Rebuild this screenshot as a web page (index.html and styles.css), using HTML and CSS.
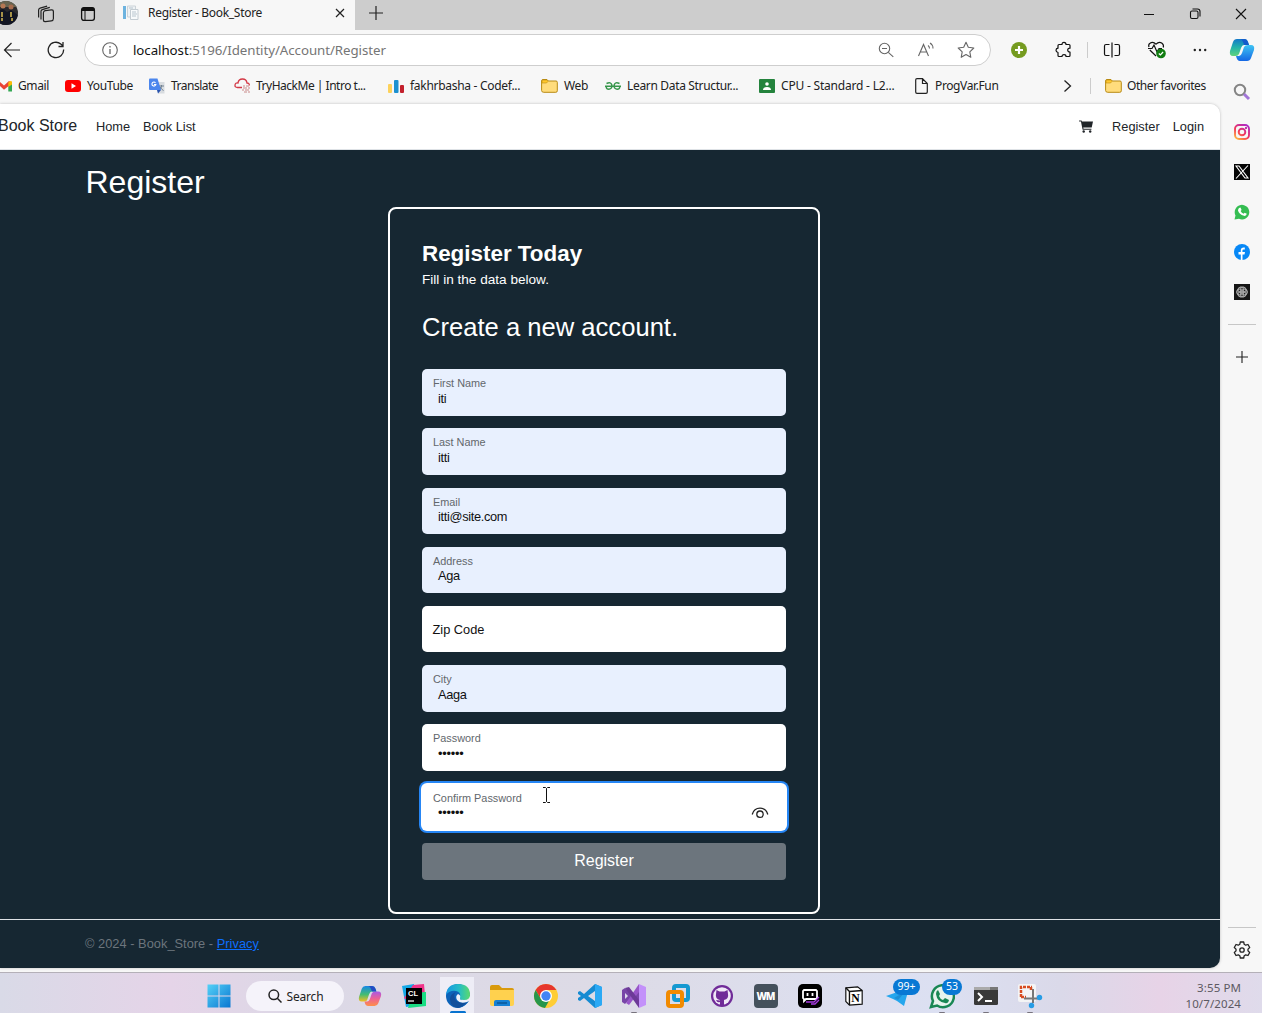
FILE: index.html
```html
<!DOCTYPE html>
<html lang="en">
<head>
<meta charset="utf-8">
<title>Register - Book_Store</title>
<link rel="stylesheet" href="styles.css">
</head>
<body>
<div class="screen">
  <div class="tabstrip">
    <svg class="avatar" width="24" height="28" viewBox="0 0 24 28"><defs><clipPath id="av"><circle cx="6" cy="13" r="12"/></clipPath></defs><g clip-path="url(#av)"><rect x="-6" width="24" height="28" fill="#29292c"/><path d="M0 0h18v7H0z" fill="#686450"/><circle cx="3" cy="6" r="2.5" fill="#b57854"/><circle cx="11" cy="7" r="2.5" fill="#a66b4d"/><path d="M-3 11l6-2 4 3 4-2 7 5v12H-3z" fill="#111522"/><path d="M2 12v5M11 12v5M2 18v3M12 18v3" stroke="#d9bd56" stroke-width="1.5"/></g></svg>
    <div class="strip-icon spaces"><svg width="18" height="18" viewBox="0 0 18 18" fill="none" stroke="#222" stroke-width="1.2"><rect x="6.4" y="5.2" width="10" height="11" rx="2" transform="skewY(-7) translate(0 1.4)"/><path d="M4 14.5V6.3q0-1.3 1.3-1.7l7.5-2.2M1.6 12.4V5q0-1.5 1.5-1.9l7-2"/></svg></div>
    <div class="strip-icon"><svg width="16" height="16" viewBox="0 0 16 16"><rect x="1.6" y="1.6" width="12.8" height="12.8" rx="2.3" fill="none" stroke="#111" stroke-width="1.3"/><path d="M1.6 3.5q0-2 2-2h8.800q2 0 2 2V5H1.600zM4.500 5h1v9h-1z" fill="#111"/></svg></div>
    <div class="tab">
      <svg width="16" height="16" viewBox="0 0 16 16"><path d="M0 1h3v13H0z" fill="#6db3df"/><path d="M4.500 1h8v11h-8z" fill="#eef2f4" stroke="#cbd2d7"/><path d="M7.500 4.500H15v10H7.500z" fill="#f8fafb" stroke="#c4ccd2"/><path d="M9 7h4M9 9h5M9 11h4M6 3h4" stroke="#b8c5ce"/></svg>
      <span class="tab-title">Register - Book_Store</span>
      <svg width="10" height="10" viewBox="0 0 10 10"><path d="M1 1l8 8M9 1L1 9" stroke="#222" stroke-width="1.200"/></svg>
    </div>
    <svg class="newtab" width="14" height="14" viewBox="0 0 14 14"><path d="M7 0v14M0 7h14" stroke="#222" stroke-width="1.200"/></svg>
    <div class="window-controls">
      <svg width="12" height="12" viewBox="0 0 12 12"><path d="M1 6.500h10" stroke="#111"/></svg>
      <svg width="12" height="12" viewBox="0 0 12 12" fill="none" stroke="#111" stroke-width="1.100"><rect x="1.500" y="3" width="7.500" height="7.500" rx="1.500"/><path d="M3.500 1h5q2.500 0 2.500 2.500V8.500"/></svg>
      <svg width="12" height="12" viewBox="0 0 12 12"><path d="M1 1l10 10M11 1L1 11" stroke="#111" stroke-width="1.100"/></svg>
    </div>
  </div>

  <div class="browser">
    <div class="main">
      <div class="toolbar">
        <svg class="back" width="18" height="16" viewBox="0 0 18 16" fill="none" stroke="#222" stroke-width="1.200"><path d="M17 8H2M8.500 1L1.500 8l7 7"/></svg>
        <svg class="reload" width="18" height="18" viewBox="0 0 18 18" fill="none" stroke="#222" stroke-width="1.300"><path d="M16.600 8.500A7.700 7.700 0 1 1 13.800 3L16 5M16 1v4.500h-4.500"/></svg>
        <div class="address">
          <svg width="16" height="16" viewBox="0 0 16 16"><circle cx="8" cy="8" r="7.300" fill="none" stroke="#666" stroke-width="1.100"/><path d="M8 7v5M8 4v1.500" stroke="#666" stroke-width="1.300"/></svg>
          <span class="url"><b>localhost</b>:5196/Identity/Account/Register</span>
          <svg class="zoom" width="16" height="16" viewBox="0 0 16 16" fill="none" stroke="#666" stroke-width="1.100"><circle cx="6.500" cy="6.500" r="5.200"/><path d="M10.300 10.300l5 4.500M4 6.500h5"/></svg>
          <svg class="read" width="18" height="16" viewBox="0 0 18 16" fill="none" stroke="#666" stroke-width="1.100"><path d="M1.500 14L6.500 2.500l5 11.500M3.300 10h6.500M11 3.500q1.500 1 1.500 3M13 1q3 1.700 3 5.500"/></svg>
          <svg width="18" height="18" viewBox="0 0 18 18" fill="none" stroke="#666" stroke-width="1.100" stroke-linejoin="round"><path d="M9 1.300l2.300 5 5.500.700-4 3.800 1 5.500L9 13.600l-4.800 2.700 1-5.500-4-3.800 5.500-.700z"/></svg>
        </div>
        <div class="tools">
          <svg width="18" height="18" viewBox="0 0 18 18"><circle cx="9" cy="9" r="8" fill="#759b20"/><path d="M9 5v8M5 9h8" stroke="#fff" stroke-width="2.200"/></svg>
          <svg class="puzzle" width="18" height="18" viewBox="0 0 18 18" fill="none" stroke="#111" stroke-width="1.200" stroke-linejoin="round"><path d="M4 3.500h3Q7 1.300 9 1.300t2 2.200h3q1 0 1 1v2.700q-2.300 0-2.300 1.900T15 11v3.500q0 1-1 1h-3q0-1.800-2-1.800t-2 1.800H4q-1 0-1-1V11.500Q1 11 1 9.200T3 7.200V4.500q0-1 1-1z"/></svg>
          <i class="rule"></i>
          <svg class="split" width="18" height="18" viewBox="0 0 18 18" fill="none" stroke="#111" stroke-width="1.200"><path d="M6.500 3.500H3Q1.500 3.500 1.500 5v8q0 1.500 1.500 1.500h3.500M11.500 3.500H15q1.500 0 1.500 1.500v8q0 1.500-1.500 1.500h-3.500M9 1.500v15"/></svg>
          <svg class="heart" width="20" height="20" viewBox="0 0 20 20" fill="none" stroke="#111" stroke-width="1.200"><path d="M9 16L2.800 10M2 7Q1 4.500 3 3.200 6 1 9 4.200q3-3.200 6-1 2 1.500 1.300 4.300M1 8.500h4l2-3.500 3 7 2-3.500h3"/><circle cx="14" cy="13.500" r="4.800" fill="#107c10" stroke="none"/><path d="M11.800 13.500l1.600 1.500 2.700-3" stroke="#fff"/></svg>
          <svg class="dotsmenu" width="18" height="18" viewBox="0 0 18 18" fill="#222"><circle cx="3.800" cy="9" r="1.200"/><circle cx="9" cy="9" r="1.200"/><circle cx="14.200" cy="9" r="1.200"/></svg>
        </div>
      </div>

      <div class="favorites">
        <div class="fav f1"><svg width="16" height="16" viewBox="0 0 16 16"><path d="M0 4l4 3.500L9 3l3 2.300-8 6.500L0 8z" fill="#ea4335"/><path d="M8.300 8L12 5v8.500H8.300z" fill="#34a853"/><path d="M8.300 4.500Q10 2 12 3.500v3L8.300 9z" fill="#fbbc04"/></svg><span>Gmail</span></div>
        <div class="fav f2"><svg width="16" height="16" viewBox="0 0 16 16"><rect y="2" width="16" height="12" rx="3" fill="#f00"/><path d="M6.500 5.200v5.600L11 8z" fill="#fff"/></svg><span>YouTube</span></div>
        <div class="fav f3"><svg width="16" height="16" viewBox="0 0 16 16"><path d="M5 4h10.500v11.500H9z" fill="#d8dce0"/><path d="M10 8h5M12.500 7v1q0 3-2.500 4M11 9q1.500 2.500 3.500 3.500" stroke="#708090" fill="none"/><path d="M1 .500h7.500L12 12H1q-1 0-1-1V1.500Q0 .500 1 .500z" fill="#4b86ed"/><path d="M8 12h4l-3 3.500z" fill="#2852ae"/><path d="M6.500 4.800A2 2 0 1 0 6.900 6.500H5" fill="none" stroke="#fff" stroke-width="1.100"/></svg><span>Translate</span></div>
        <div class="fav f4"><svg width="18" height="16" viewBox="0 0 18 16"><path d="M8 9.500H3.500Q.700 9.500 1 7t3-2Q4.500 1 8.500 1t4.500 4q2.500 0 2.300 2.500" fill="none" stroke="#d33845" stroke-width="1.300"/><path d="M9 8h2m1 0h3M9 10h4m1 0h2M8 12h2m1 0h4M10 14h3m1 0h2" stroke="#c98a8a" stroke-width="1.200"/></svg><span>TryHackMe | Intro t...</span></div>
        <div class="fav f5"><svg width="16" height="16" viewBox="0 0 16 16"><rect x="0" y="6" width="4" height="9" rx="1" fill="#fdd25b"/><rect x="6" y="2" width="4.500" height="13" rx="1" fill="#1c91d0"/><rect x="12" y="7" width="4" height="8" rx="1" fill="#c3202c"/></svg><span>fakhrbasha - Codef...</span></div>
        <div class="fav f6"><svg width="17" height="16" viewBox="0 0 17 16"><path d="M.600 3Q.600 1.500 2 1.500h4L7.500 3H15q1.300 0 1.300 1.300v8.500q0 1.500-1.500 1.500h-12Q.600 14.300.600 12.500z" fill="#ffdc7c" stroke="#b88a13"/><path d="M1 3Q1 2 2 2h4l1.200 1.200L5.500 5H1z" fill="#ffc72d" stroke="#b88a13" stroke-width=".600"/></svg><span>Web</span></div>
        <div class="fav f7"><svg width="16" height="16" viewBox="0 0 16 16" fill="none" stroke="#37964b" stroke-width="1.500"><path d="M0 8.200h16M1.500 5.500Q6 3.500 6.800 7t-3 4.300Q1.500 11.300 1.200 9M14.500 5.500Q10 3.500 9.200 7t3 4.300Q14.500 11.300 14.800 9"/></svg><span>Learn Data Structur...</span></div>
        <div class="fav f8"><svg width="16" height="16" viewBox="0 0 16 16"><rect y="1" width="16" height="14" rx="1" fill="#24833d"/><circle cx="8" cy="6" r="1.800" fill="#fff"/><path d="M4 12q0-3 4-3t4 3z" fill="#fff"/></svg><span>CPU - Standard - L2...</span></div>
        <div class="fav f9"><svg width="13" height="16" viewBox="0 0 13 16" fill="none" stroke="#222" stroke-width="1.200"><path d="M7.500.700H2Q.700.700.700 2v12q0 1.300 1.300 1.300h9q1.300 0 1.300-1.300V5.500zM7.500.700V5.500h4.800"/></svg><span>ProgVar.Fun</span></div>
        <svg class="more" width="10" height="14" viewBox="0 0 10 14" fill="none" stroke="#222" stroke-width="1.300"><path d="M1.500 1.500L7.500 7l-6 5.500"/></svg>
        <i class="rule"></i>
        <div class="fav f10"><svg width="17" height="16" viewBox="0 0 17 16"><path d="M.600 3Q.600 1.500 2 1.500h4L7.500 3H15q1.300 0 1.300 1.300v8.500q0 1.500-1.500 1.500h-12Q.600 14.300.600 12.500z" fill="#ffdc7c" stroke="#b88a13"/><path d="M1 3Q1 2 2 2h4l1.200 1.200L5.500 5H1z" fill="#ffc72d" stroke="#b88a13" stroke-width=".600"/></svg><span>Other favorites</span></div>
      </div>

      <div class="page">
        <header class="navbar">
          <a class="brand">Book Store</a><a class="home">Home</a><a class="list">Book List</a>
          <svg class="cart" width="15" height="13" viewBox="0 0 16 14"><path d="M0 .500h2.700l.400 1H15L13.600 8H4.500l.300 1.300h8.500v1.200H3.800L2 1.700H0z" fill="#212529"/><circle cx="5" cy="12.300" r="1.300" fill="#212529"/><circle cx="12" cy="12.300" r="1.300" fill="#212529"/></svg>
          <a class="reg">Register</a><a>Login</a>
        </header>
        <main class="content">
          <h1>Register</h1>
          <form class="card">
            <h3>Register Today</h3>
            <p>Fill in the data below.</p>
            <h2>Create a new account.</h2>
            <div class="field filled"><label>First Name</label><span>iti</span></div>
            <div class="field filled"><label>Last Name</label><span>itti</span></div>
            <div class="field filled"><label>Email</label><span>itti@site.com</span></div>
            <div class="field filled"><label>Address</label><span>Aga</span></div>
            <div class="field empty"><label>Zip Code</label></div>
            <div class="field filled"><label>City</label><span>Aaga</span></div>
            <div class="field"><label>Password</label><span class="dots">••••••</span></div>
            <div class="field focus"><label>Confirm Password</label><span class="dots">••••••</span>
              <svg class="eye" width="18" height="12" viewBox="0 0 18 12" fill="none" stroke="#222" stroke-width="1.300"><path d="M1.200 7.500Q3 1.200 9 1.200t7.800 6.300"/><circle cx="9" cy="7.200" r="3.200"/></svg>
              <svg class="ibeam" width="9" height="18" viewBox="0 0 9 18" fill="none" stroke="#111"><path d="M1 1.500h2.500L4.500 2.500l1-1H8M4.500 2.500v13M1 16.500h2.500l1-1 1 1H8"/></svg>
            </div>
            <div class="submit">Register</div>
          </form>
        </main>
        <footer class="footer">© 2024 - Book_Store - <a>Privacy</a></footer>
      </div>
    </div>

    <aside class="sidebar">
      <svg class="copilot" width="26" height="24" viewBox="0 0 26 24"><defs><linearGradient id="c1" x2="0" y2="1"><stop stop-color="#1378c9"/><stop offset=".5" stop-color="#22b3aa"/><stop offset="1" stop-color="#61d37d"/></linearGradient><linearGradient id="c2" x2="0" y2="1"><stop stop-color="#3fc4f3"/><stop offset="1" stop-color="#1467e4"/></linearGradient></defs><path d="M8 1h8q2 0 3 3l1 3h-5q-2 0-3 3l-2 6q-1 2-3 2H4q-4 0-3-5L4 4q1-3 4-3z" fill="url(#c1)"/><path d="M19 7h3q4 0 3 5l-3 8q-1 3-4 3h-7q-3 0-4-5h3q2 0 3-3l2-6q1-2 4-2z" fill="url(#c2)"/><path d="M15 1q3 0 4 3l1 3h-5l-1-3q-1-3-3-3z" fill="#145ccb"/></svg>
      <svg width="18" height="18" viewBox="0 0 18 18" fill="none"><circle cx="7" cy="7" r="5.200" stroke="#858585" stroke-width="2"/><path d="M11 11l5 5" stroke="#a276d8" stroke-width="3"/></svg>
      <svg width="18" height="18" viewBox="0 0 18 18" fill="none" stroke="url(#ig)" stroke-width="1.900"><defs><linearGradient id="ig" gradientUnits="userSpaceOnUse" x1="3" y1="17" x2="14" y2="1"><stop stop-color="#ffc83d"/><stop offset=".45" stop-color="#f43658"/><stop offset="1" stop-color="#a72ad0"/></linearGradient></defs><rect x="2" y="2" width="14" height="14" rx="4"/><circle cx="9" cy="9" r="3.300"/><path d="M13 4v2"/></svg>
      <svg width="18" height="18" viewBox="0 0 18 18"><path d="M1 1h16v16H1z" fill="#050505"/><path d="M3 3h3l9 12h-3zM15 2.500L3 15.500" fill="none" stroke="#fff" stroke-width="1.100"/></svg>
      <svg width="18" height="18" viewBox="0 0 18 18"><path d="M1.500 16.500l1-4A7.300 7.300 0 1 1 6 15.800z" fill="#35bd52"/><path d="M6 5l1.500-.500L8.600 7l-1 1q1 2 3 2.800l1-1 2.200 1q-.500 2.500-2.800 2Q6 11.500 5 7.500 5 6 6 5z" fill="#fff"/></svg>
      <svg width="18" height="18" viewBox="0 0 18 18"><circle cx="9" cy="9" r="8" fill="#0788f6"/><path d="M7.800 17v-5.600H5.500V9h2.300V7.200q0-3.200 4-2.700v2h-1.200q-1.200 0-1.200 1.200V9H12l-.500 2.400h-2V17z" fill="#fff"/></svg>
      <svg width="18" height="18" viewBox="0 0 18 18"><path d="M1 1h16v16H1z" fill="#151515"/><g fill="none" stroke="#aaa" stroke-width=".9"><ellipse cx="9" cy="7" rx="4" ry="3"/><ellipse cx="9" cy="7" rx="4" ry="3" transform="rotate(60 9 9)"/><ellipse cx="9" cy="7" rx="4" ry="3" transform="rotate(120 9 9)"/><ellipse cx="9" cy="7" rx="4" ry="3" transform="rotate(180 9 9)"/><ellipse cx="9" cy="7" rx="4" ry="3" transform="rotate(240 9 9)"/><ellipse cx="9" cy="7" rx="4" ry="3" transform="rotate(300 9 9)"/></g></svg>
      <i class="line"></i>
      <svg class="plus" width="12" height="12" viewBox="0 0 12 12"><path d="M6 0v12M0 6h12" stroke="#222" stroke-width="1.100"/></svg>
      <i class="line bottom"></i>
      <svg class="gear" width="18" height="18" viewBox="0 0 18 18" fill="none" stroke="#222" stroke-width="1.300" stroke-linejoin="round"><path d="M7.300 1h3.400l.500 2.300 1.500.900 2.300-.700 1.700 3-1.700 1.600v1.800l1.700 1.600-1.700 3-2.300-.700-1.500.900-.500 2.300H7.300l-.500-2.300-1.500-.900-2.300.700-1.700-3L3 9.900V8.100L1.300 6.500 3 3.500l2.300.700 1.500-.900z"/><circle cx="9" cy="9" r="2.200"/></svg>
    </aside>
  </div>

  <div class="taskbar">
    <div class="app"><svg width="24" height="24" viewBox="0 0 24 24"><defs><linearGradient id="win" gradientUnits="userSpaceOnUse" x2="24" y2="24"><stop stop-color="#56d3f8"/><stop offset="1" stop-color="#0874d0"/></linearGradient></defs><path d="M.500.500h11v11H.500zM12.500.500h11v11h-11zM.500 12.500h11v11H.500zM12.500 12.500h11v11h-11z" fill="url(#win)"/></svg></div>
    <div class="search"><svg width="14" height="14" viewBox="0 0 14 14" fill="none" stroke="#222" stroke-width="1.500"><circle cx="5.800" cy="5.800" r="4.800"/><path d="M9.300 9.300L13.500 13.500"/></svg><span>Search</span></div>
    <div class="app"><svg width="24" height="22" viewBox="0 0 26 24"><defs><linearGradient id="p1" x2="0" y2="1"><stop stop-color="#1587e8"/><stop offset=".55" stop-color="#43bc72"/><stop offset="1" stop-color="#f2bf22"/></linearGradient><linearGradient id="p2" x2="0" y2="1"><stop stop-color="#a958e5"/><stop offset=".5" stop-color="#ed6294"/><stop offset="1" stop-color="#ff9047"/></linearGradient></defs><path d="M8 1h8q2 0 3 3l1 3h-5q-2 0-3 3l-2 6q-1 2-3 2H4q-4 0-3-5L4 4q1-3 4-3z" fill="url(#p1)"/><path d="M19 7h3q4 0 3 5l-3 8q-1 3-4 3h-7q-3 0-4-5h3q2 0 3-3l2-6q1-2 4-2z" fill="url(#p2)"/><path d="M15 1q3 0 4 3l1 3h-5l-1-3q-1-3-3-3z" fill="#234bc3"/></svg></div>
    <div class="app"><svg width="24" height="24" viewBox="0 0 24 24"><path d="M0 2l12-2-2 22-6 1z" fill="#15a9e7"/><path d="M11 1l11-1 1 11-10 11-11-8z" fill="#f03388"/><path d="M11 9l13-1v14l-18 2z" fill="#19dd83"/><rect x="4" y="4" width="16" height="16"/><text x="6" y="12" font-family="Liberation Sans" font-size="7.500" font-weight="700" fill="#fff">CL</text><path d="M6 17h6" stroke="#fff" stroke-width="1.200"/></svg></div>
    <div class="app active"><svg width="26" height="26" viewBox="0 0 26 26"><defs><linearGradient id="e1"><stop stop-color="#1697e5"/><stop offset=".55" stop-color="#25bdc5"/><stop offset="1" stop-color="#5cda6c"/></linearGradient></defs><circle cx="13" cy="13" r="12" fill="#0c63b9"/><path d="M15 17q3 3 9 1-3 5-9 7l12 1V12z" fill="#eeedf6"/><path d="M1 12Q2 1 13 1q12 0 12 11 0 5-6 5-5 0-4-3 1-5-4-6-6-1-10 4z" fill="url(#e1)"/><path d="M11 9q-3 2-1 7t12 3q-4 5-9 6Q5 24 5 16q0-5 6-7z" fill="#114f9b"/><path d="M13 11q-3 2-1 6 3 4 10 2 2-1 1-2-8 2-8-2 1-3-2-4z" fill="#eef2fa"/></svg></div>
    <div class="app"><svg width="26" height="24" viewBox="0 0 26 24"><path d="M1 3q0-2 2-2h7l3 3h10q2 0 2 2v5H1z" fill="#d99a0c"/><path d="M1 6h24v14q0 2-2 2H3q-2 0-2-2z" fill="#ffd14e"/><path d="M5 22v-4q0-2 2-2h12q2 0 2 2v4z" fill="#1680d4"/><path d="M8 19h10" stroke="#0b5798" stroke-width="1.500"/></svg></div>
    <div class="app"><svg width="26" height="26" viewBox="0 0 26 26"><circle cx="13" cy="13" r="12" fill="#ffcd35"/><path d="M2.600 7A12 12 0 0 1 23.400 7H13L8 16z" fill="#e6362d"/><path d="M2.600 7A12 12 0 0 0 12 25l5-9-9 0z" fill="#27964b"/><circle cx="13" cy="13" r="6" fill="#fff"/><circle cx="13" cy="13" r="4.700" fill="#4285f4"/></svg></div>
    <div class="app"><svg width="26" height="26" viewBox="0 0 26 26"><path d="M18 1l7 3v18l-7 3L7 15l-4 3-2-1v-2l3-2-3-2V9l2-1 4 3zM18 8l-7 5 7 5z" fill="#168bd2" fill-rule="evenodd"/><path d="M18 1l7 3v18l-7 3z" fill="#2ba9f5"/></svg></div>
    <div class="app running"><svg width="26" height="26" viewBox="0 0 26 26"><path d="M1 7l3-2 14 15V6L4 21l-3-2z" fill="#7845a8"/><path d="M4 10v6l3-3z" fill="#ded8ec"/><path d="M18 1l7 3v18l-7 3z" fill="#c391fa"/><path d="M5 20L18 1v8L8 22z" fill="#9856c8"/><path d="M4 5l14 20v-8L8 4z" fill="#6d3a98"/></svg></div>
    <div class="app"><svg width="26" height="26" viewBox="0 0 26 26" fill="none" stroke-width="4"><rect x="9" y="3" width="14" height="14" rx="2" stroke="#1599d1"/><rect x="3" y="9" width="14" height="14" rx="2" stroke="#f18a00"/></svg></div>
    <div class="app"><svg width="24" height="24" viewBox="0 0 24 24"><circle cx="12" cy="12" r="11" fill="#702b98"/><circle cx="12" cy="12" r="8.800" fill="#f0e8f7"/><path d="M6.500 6l3 1.500h5l3-1.500.500 4q1 5-4 6v5h-4v-3q-3 1-4-2l4 .500v-.500Q5 15 6 10z" fill="#702b98"/></svg></div>
    <div class="app"><svg width="24" height="24" viewBox="0 0 24 24"><rect width="24" height="24" rx="4" fill="#45515c"/><text x="2.500" y="15.800" textLength="19" font-family="Open Sans" font-size="10" font-weight="800" fill="#fff">WM</text></svg></div>
    <div class="app"><svg width="24" height="24" viewBox="0 0 24 24"><rect width="24" height="24" rx="5"/><path d="M6 6h12l1 1v7l-1 1H8l-2 2v-2l-1-1V7z" fill="none" stroke="#fff" stroke-width="1.800"/><path d="M9.500 9v3M14.500 9v3" stroke="#fff" stroke-width="1.800"/><path d="M8 18h8l5-5M13 20h4l4-4" stroke="#a63be1" stroke-width="1.300" fill="none"/></svg></div>
    <div class="app"><svg width="20" height="20" viewBox="0 0 20 22"><path d="M1 2l13-1 5 4v15l-14 1-4-4z" fill="#fff" stroke="#111" stroke-width="1.300"/><path d="M1 2l4 4 14-1M5 6v15" fill="none" stroke="#111" stroke-width="1.500"/><text x="7" y="17.500" font-family="Liberation Serif" font-weight="700" font-size="13">N</text></svg></div>
    <div class="app"><svg width="26" height="24" viewBox="0 0 26 24"><path d="M1 12L24 4 19 22l-7-5-4-2z" fill="#25a6ed"/><path d="M9 14L21 7l-8 9z" fill="#1c8fd6"/></svg><span class="badge wide">99+</span></div>
    <div class="app running"><svg width="26" height="26" viewBox="0 0 26 26"><path d="M2 24l2-6A11 11 0 1 1 8 22.500z" fill="#e7f4ed" stroke="#198754" stroke-width="2.500"/><path d="M9 7l2 4-1 2q1 3 4 4l2-2 4 2q-1 4-4 3Q8 19 7 11q0-3 2-4z" fill="#198754"/></svg><span class="badge">53</span></div>
    <div class="app running"><svg width="24" height="20" viewBox="0 0 24 20"><rect y="1" width="24" height="18" rx="1.500" fill="#393939"/><path d="M0 1h24v3H0z" fill="#777"/><path d="M0 1h16v3H0z" fill="#aaa"/><path d="M4 7l4 4-4 4M11 15h7" stroke="#fff" stroke-width="2" fill="none"/></svg></div>
    <div class="app running"><svg width="26" height="26" viewBox="0 0 26 26"><rect x="1" y="1" width="18" height="18" rx="2" fill="#f4f4f5"/><path d="M4 14V4h11" fill="none" stroke="#d84b20" stroke-width="2.500" stroke-dasharray="3 1"/><path d="M4 14h5M14 4v4" stroke="#d84b20" stroke-width="2.500" stroke-dasharray="3 1"/><path d="M16 6v14M7 15.500h14" stroke="#777" stroke-width="2"/><circle cx="22.500" cy="14.500" r="2.700" fill="#269ce5"/><circle cx="14.500" cy="22.500" r="2.700" fill="#269ce5"/></svg></div>
    <div class="clock"><span>3:55 PM</span><span>10/7/2024</span></div>
  </div>
</div>
</body>
</html>
```
FILE: styles.css
```css
* { box-sizing: border-box; }
body { margin: 0; font-family: "Liberation Sans", Arial, sans-serif; }
svg { display: block; flex: none; }
i { display: block; }
.screen { width: 1262px; height: 1013px; overflow: hidden; background: #f7f7f7; display: flex; flex-direction: column; }

.tabstrip { height: 30px; flex: none; background: #cdcdcd; display: flex; align-items: center; padding-bottom: 3px; }
.avatar { width: 24px; margin-right: 1px; }
.strip-icon { width: 42px; display: flex; justify-content: center; }
.tab { width: 240px; height: 30px; margin: 3px 0 0 6px; padding: 0 10px 4px 8px; background: #f7f7f7; display: flex; align-items: center; }
.tab-title { flex: 1; margin-left: 9px; font: 12px/16px "Noto Sans", sans-serif; letter-spacing: -.3px; color: #222; white-space: nowrap; }
.newtab { margin: -1px 0 0 14px; }
.window-controls { margin-left: auto; padding-right: 15px; display: flex; gap: 34px; }

.browser { height: 942px; flex: none; display: flex; }
.main { width: 1220px; }
.toolbar { height: 40px; display: flex; align-items: center; }
.back { margin-left: 3px; }
.reload { margin-left: 26px; }
.address { width: 907px; height: 32px; margin-left: 19px; border: 1px solid #cecece; border-radius: 16px; background: #fff; display: flex; align-items: center; padding: 0 15px 0 17px; }
.url { flex: 1; margin-left: 15px; font: 13.300px/20px "Noto Sans", sans-serif; letter-spacing: -.06px; color: #757575; }
.url b { color: #111; font-weight: 400; }
.zoom { margin-right: 23px; }
.read { margin-right: 22px; }
.tools { flex: 1; display: flex; align-items: center; padding-left: 19px; }
.puzzle { margin: 0 14px 0 27px; }
.split { margin: 0 26px 0 15px; }
.heart { margin-right: 24px; }
.rule { width: 1px; height: 16px; background: #ccc; }

.favorites { height: 34px; display: flex; align-items: center; padding-bottom: 2px; }
.fav { display: flex; align-items: center; gap: 6px; flex: none; font: 12px/16px "Noto Sans", sans-serif; letter-spacing: -.38px; color: #222; white-space: nowrap; }
.f1 { width: 65px; }
.f1 svg { margin-right: -4px; }
.f2 { width: 84px; }
.f3 { width: 85px; letter-spacing: -.5px; }
.f4 { width: 154px; gap: 4px; letter-spacing: -.49px; }
.f5 { width: 153px; letter-spacing: -.29px; }
.f6 { width: 64px; gap: 6px; }
.f7 { width: 154px; letter-spacing: -.33px; }
.f8 { width: 156px; letter-spacing: -.2px; }
.f9 { width: 148px; gap: 7px; }
.more { margin-right: 17px; }
.favorites .rule { margin-right: 14px; }
.f10 { gap: 5px; letter-spacing: -.42px; }

.page { height: 864px; border-radius: 0 10px 10px 0; overflow: hidden; display: flex; flex-direction: column; box-shadow: 0 0 3px #bbb; }
.navbar { height: 46px; flex: none; background: #fff; border-bottom: 1px solid #dee2e6; display: flex; align-items: center; font-size: 12.800px; color: #212529; padding-right: 16px; }
.brand { font-size: 16px; margin: -2px 0 0 -2px; width: 98px; }
.home { width: 47px; }
.cart { margin: -1px 18px 0 auto; }
.reg { margin-right: 13px; }
.content { height: 769px; flex: none; background: #162732; color: #fff; padding-top: 13px; }
h1, h2, h3, p { margin: 0; font-weight: 400; }
h1 { font-size: 32px; line-height: 38px; margin-left: 85.500px; }
.card { width: 432px; height: 707px; margin: 6px 0 0 388px; border: 2px solid #fff; border-radius: 8px; padding: 31px 32px; }
h3 { font-size: 22.400px; line-height: 28px; font-weight: 700; }
p { font-size: 13.600px; line-height: 19px; margin-top: 2px; }
h2 { font-size: 25.600px; line-height: 31px; margin: 23px 0 26.200px; }
.field { height: 46.400px; margin-bottom: 12.800px; background: #fff; border-radius: 5px; position: relative; padding: 8px 11px 0; display: flex; flex-direction: column; color: #111; font-size: 12.800px; line-height: 15px; }
.field label { font-size: 10.880px; line-height: 13px; color: #62676c; }
.field span { margin: .500px 0 0 5px; letter-spacing: -.33px; }
.filled { background: #e8f0fe; }
.empty { padding: 16px 10.500px 0; }
.empty label { font-size: 12.800px; line-height: 15px; color: #111; }
.field .dots { letter-spacing: -.25px; }
.focus { box-shadow: 0 0 0 1px #fff, 0 0 0 3px #2686f5; }
.eye { position: absolute; right: 17px; top: 23.500px; }
.ibeam { position: absolute; left: 120px; top: 2.500px; }
.submit { height: 37.600px; background: #6c757d; border-radius: 4px; font-size: 16px; line-height: 36px; text-align: center; }
.footer { flex: 1; background: #162732; border-top: 1px solid #dee2e6; padding: 16px 0 0 85px; font-size: 12.800px; line-height: 15px; letter-spacing: .03px; color: #6c757d; }
.footer a { color: #0d6efd; text-decoration: underline; }

.sidebar { width: 42px; display: flex; flex-direction: column; align-items: center; padding: 8px 0 0 1px; }
.copilot { margin-bottom: 9px; }
.sidebar svg:not(.copilot):not(.plus):not(.gear) { margin: 11px 0; }
.sidebar .copilot + svg { margin-top: 12px !important; }
.line { width: 28px; height: 1px; background: #c7c7c7; margin-top: 12px; }
.plus { margin-top: 26px; }
.line.bottom { margin-top: auto; }
.gear { margin: 13px 0; }

.taskbar { height: 41px; flex: none; border-top: 1px solid #b4b0b8; background: linear-gradient(90deg, #d9dae7 0, #e5d4e8 170px, #dcd8e6 300px, #dddbe6 600px, #dce0f2 940px, #dad9e9 1060px, #e7d3e7 1160px, #dfdbeb 1262px); display: flex; padding-left: 197px; }
.app { width: 44px; height: 46px; flex: none; display: flex; align-items: center; justify-content: center; position: relative; }
.active { background: linear-gradient(#eeedf6, #eeedf6) 4px 4px / 34px 44px no-repeat; }
.active::after { content: ""; width: 16px; height: 3px; border-radius: 2px; background: #0873cf; position: absolute; bottom: 5px; }
.running::after { content: ""; width: 6px; height: 2px; border-radius: 2px; background: #77737d; position: absolute; bottom: 5px; }
.search { width: 98px; height: 30px; flex: none; margin: 8px 4px 0 5px; padding-left: 1px; border-radius: 16px; background: #f5f3fa; display: flex; align-items: center; justify-content: center; gap: 5px; font: 12px/16px "Noto Sans", sans-serif; letter-spacing: -.2px; color: #222; }
.search span { margin-top: 2px; }
.badge { position: absolute; left: 22px; top: 6px; width: 20px; height: 16px; border-radius: 8px; background: #0878d4; color: #fff; font: 10.500px/15px "Noto Sans", sans-serif; text-align: center; }
.badge.wide { left: 17px; width: 27px; }
.clock { margin-left: auto; padding: 7px 21px 0 0; display: flex; flex-direction: column; align-items: flex-end; font: 11.500px/16px "Noto Sans", sans-serif; letter-spacing: .1px; color: #5c5962; }
```
